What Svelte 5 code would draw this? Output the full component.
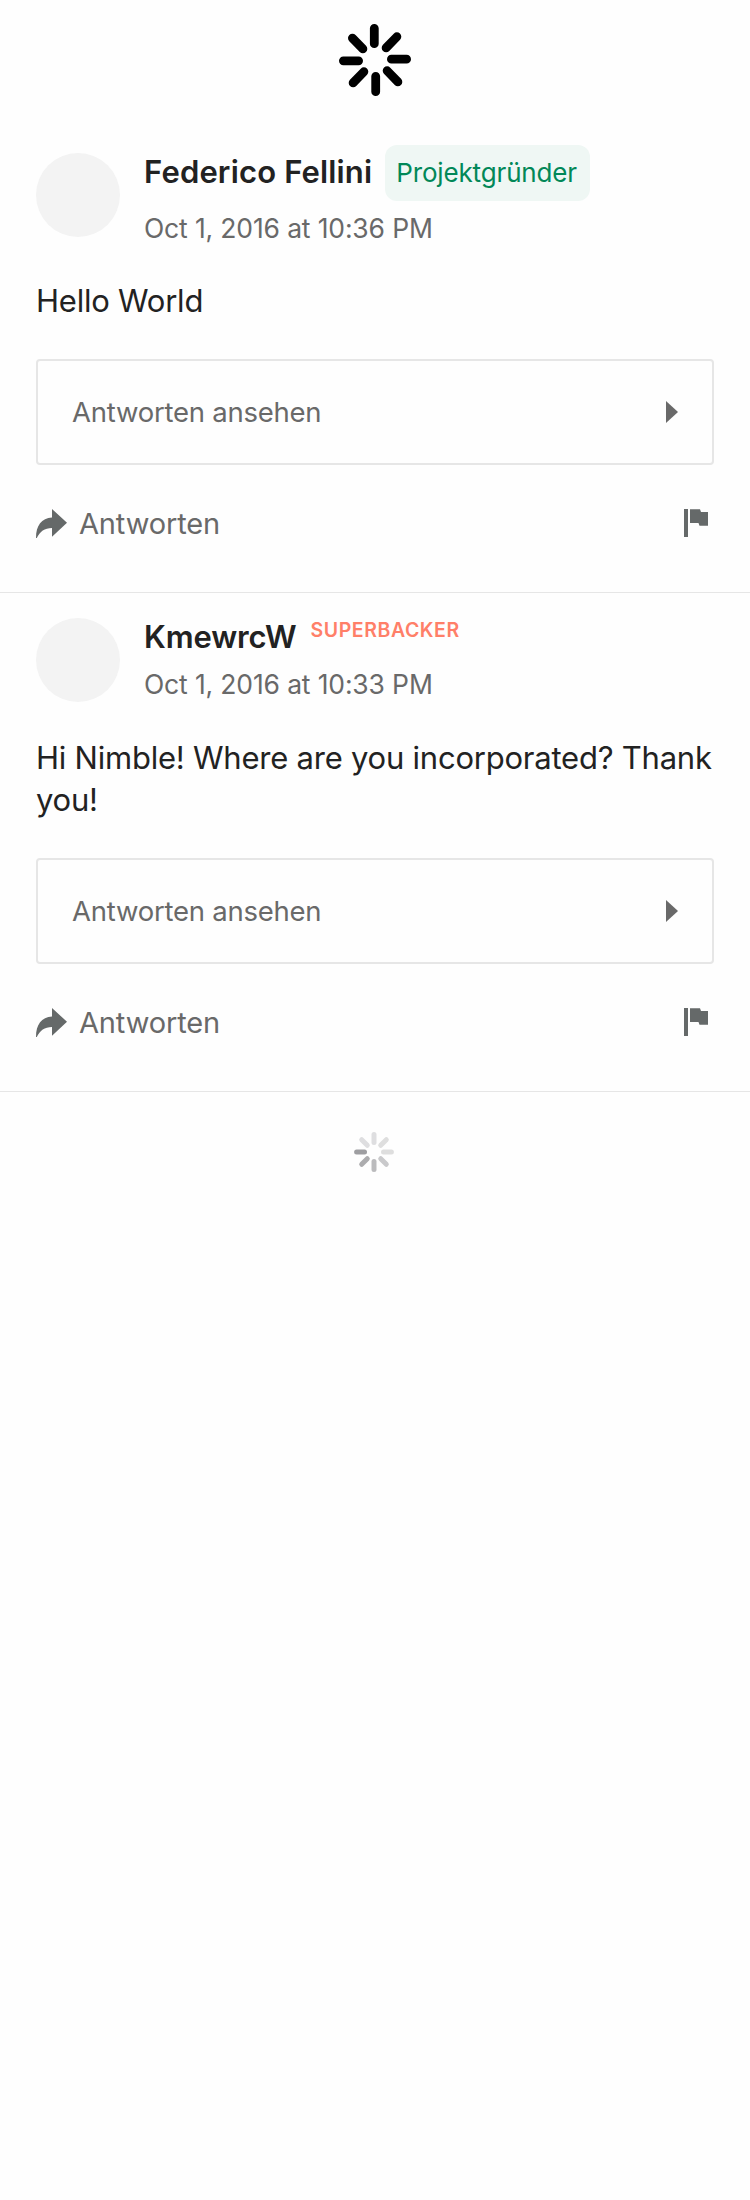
<script>
  const comments = [
    { name: 'Federico Fellini', badge: 'Projektgründer', kind: 'creator', date: 'Oct 1, 2016 at 10:36 PM', text: 'Hello World' },
    { name: 'KmewrcW', badge: 'SUPERBACKER', kind: 'superbacker', date: 'Oct 1, 2016 at 10:33 PM', text: 'Hi Nimble! Where are you incorporated? Thank you!' }
  ];
  const spokes = [
    { angle: 0, color: '#dedee0' },
    { angle: 45, color: '#dedede' },
    { angle: 90, color: '#dedede' },
    { angle: 135, color: '#c9c9cb' },
    { angle: 180, color: '#bbbbbd' },
    { angle: 225, color: '#acacae' },
    { angle: 270, color: '#9e9ea1' },
    { angle: 315, color: '#dedee0' }
  ];
</script>

<main>
  <div class="top-loader">
    <svg width="76" height="76" viewBox="337 22 76 76" stroke="#000" stroke-width="8.8" stroke-linecap="round">
      <path d="M374.3 28.3V43.7M386.1 47.9 396.9 36.7M391.4 59.2H406.6M387.1 70.7 397.9 81.9M375.7 76.3V91.7M363.9 71.7 353.1 82.9M343.4 60.8H358.6M362.9 48.9 352.4 38.1" />
    </svg>
  </div>

  {#each comments as comment}
    <article>
      <header>
        <div class="avatar"></div>
        <div>
          <div class="name-row {comment.kind}">
            <span class="name">{comment.name}</span>
            <span class="badge">{comment.badge}</span>
          </div>
          <time>{comment.date}</time>
        </div>
      </header>
      <p>{comment.text}</p>
      <button>
        <span>Antworten ansehen</span>
        <svg width="12" height="22" viewBox="0 0 12 22"><path d="M0 0 12 11 0 22Z" fill="#696969" /></svg>
      </button>
      <footer>
        <svg width="31" height="29" viewBox="0 0 31 29"><path d="M16 0 31 13.8 16 27.8V19C8.5 19 4 22.5 .8 29H0C0 16.500 5.500 9 16 8.500Z" fill="#656969" /></svg>
        <span class="reply">Antworten</span>
        <svg class="flag" width="24" height="28" viewBox="0 0 24 28"><path d="M0 0H4V28H0ZM6 .3H16L17 3H24V16.800H15.500L14.500 14H6Z" fill="#656969" /></svg>
      </footer>
    </article>
  {/each}

  <div class="bottom-loader">
    <svg width="40" height="40" viewBox="-20 -20 40 40" stroke-width="5" stroke-linecap="round">
      {#each spokes as spoke}
        <path d="M0-9.500V-17.400" stroke={spoke.color} transform="rotate({spoke.angle})" />
      {/each}
    </svg>
  </div>
</main>

<style>
  :global(body) {
    margin: 0;
    background: #fefefe;
  }
  main {
    min-height: 100vh;
    background: #fefefe;
    font-family: Inter, 'Liberation Sans', sans-serif;
    color: #222;
  }
  .top-loader {
    height: 98px;
    padding-top: 22px;
    display: flex;
    justify-content: center;
    align-items: flex-start;
  }
  article {
    padding: 25px 36px 48px;
    border-bottom: 1px solid #e6e6e6;
  }
  header {
    display: flex;
    align-items: center;
    gap: 24px;
  }
  .avatar {
    width: 84px;
    height: 84px;
    border-radius: 50%;
    background: #f3f3f3;
  }
  .name-row {
    display: flex;
    align-items: center;
    height: 40px;
    margin-bottom: 9px;
    gap: 14px;
  }
  .name-row.creator {
    height: 56px;
    gap: 13px;
  }
  .name {
    padding-bottom: 2px;
    font-size: 31px;
    font-weight: 600;
    line-height: 38px;
    letter-spacing: -0.12px;
  }
  .creator .name {
    letter-spacing: 0.16px;
  }
  .creator .badge {
    box-sizing: border-box;
    width: 205px;
    height: 56px;
    padding-left: 11px;
    border-radius: 12px;
    background: #eff7f4;
    color: #028858;
    font-size: 26px;
    line-height: 56px;
    letter-spacing: -0.15px;
    white-space: nowrap;
  }
  .superbacker .badge {
    align-self: flex-start;
    color: #ff7f68;
    font-size: 19.5px;
    font-weight: 600;
    line-height: 24px;
    letter-spacing: 0.57px;
  }
  time {
    display: block;
    font-size: 26.5px;
    line-height: 35px;
    letter-spacing: -0.15px;
    color: #696969;
  }
  .creator + time {
    padding-top: 1px;
    margin-bottom: -1px;
  }
  p {
    margin: 35px 0 37px;
    font-size: 31px;
    line-height: 42px;
    letter-spacing: -0.225px;
  }
  button {
    box-sizing: border-box;
    width: 100%;
    height: 106px;
    padding: 0 34px;
    display: flex;
    align-items: center;
    justify-content: space-between;
    border: 2px solid #e6e6e6;
    border-radius: 4px;
    background: transparent;
    color: #696969;
    font: 400 27.5px Inter, sans-serif;
    letter-spacing: -0.24px;
  }
  footer {
    display: flex;
    align-items: center;
    height: 42px;
    margin-top: 37px;
    gap: 12px;
    font-size: 29px;
    line-height: 42px;
    letter-spacing: -0.14px;
    color: #696969;
  }
  .reply {
    padding-top: 2px;
  }
  .flag {
    margin-left: auto;
    margin-right: 6px;
  }
  .bottom-loader {
    display: flex;
    justify-content: center;
    padding: 40px 2px 0 0;
  }
</style>
